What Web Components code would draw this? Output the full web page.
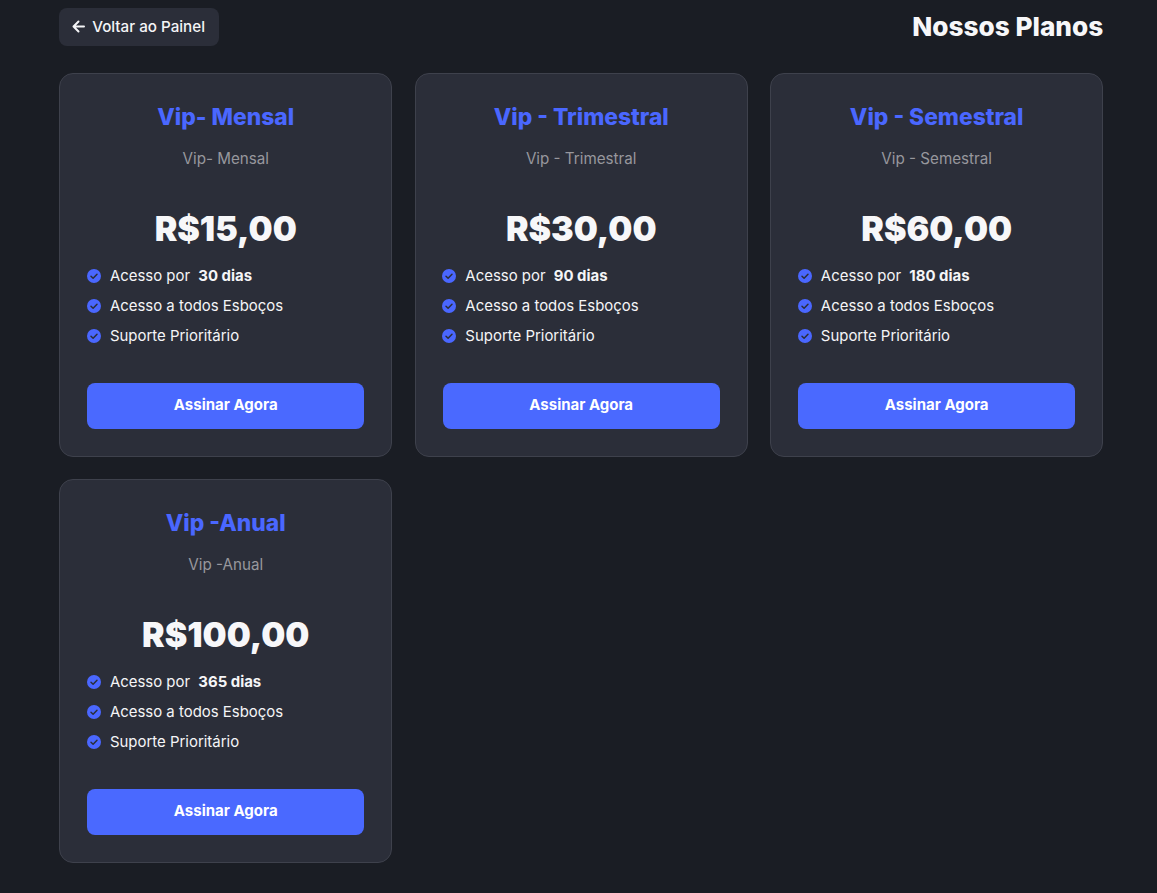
<!DOCTYPE html>
<html lang="pt-BR">
<head>
<meta charset="utf-8">
<title>Nossos Planos</title>
<style>
    html, body { margin: 0; background: #1a1d24; }
    body { font-family: Inter, "Liberation Sans", sans-serif; color: #f5f5f7; }
</style>
</head>
<body>
<plans-page>
    <plan-card name="Vip- Mensal" price="R$15,00" days="30 dias"></plan-card>
    <plan-card name="Vip - Trimestral" price="R$30,00" days="90 dias"></plan-card>
    <plan-card name="Vip - Semestral" price="R$60,00" days="180 dias"></plan-card>
    <plan-card name="Vip -Anual" price="R$100,00" days="365 dias"></plan-card>
</plans-page>

<script>
class PlansPage extends HTMLElement {
    constructor() {
        super();
        this.attachShadow({ mode: 'open' });
        this.shadowRoot.innerHTML = `
            <style>
                :host {
                    display: block;
                    padding: 8px 53.8px 30px 59.2px;
                }
                header {
                    display: flex;
                    justify-content: space-between;
                    align-items: center;
                    margin-bottom: 27px;
                }
                a {
                    display: flex;
                    align-items: center;
                    gap: 7px;
                    height: 38px;
                    box-sizing: border-box;
                    width: 160px;
                    padding: 0 13px 2px;
                    background: #2b2e39;
                    border-radius: 8px;
                    color: #f5f5f7;
                    font-size: 15.2px;
                    font-weight: 500;
                    text-decoration: none;
                    white-space: nowrap;
                }
                svg { width: 13px; height: 13px; flex: none; }
                h1 {
                    margin: 0 0 2px;
                    font-size: 26.2px;
                    font-weight: 800;
                    color: #f7f7f9;
                }
                .grid {
                    display: grid;
                    grid-template-columns: repeat(3, 1fr);
                    gap: 22.4px;
                }
            </style>
            <header>
                <a href="#">
                    <svg viewBox="0 0 13 13" fill="none" stroke="currentColor" stroke-width="2" stroke-linecap="round" stroke-linejoin="round">
                        <path d="M12 6.5H1.5M6.5 1.5l-5 5 5 5"/>
                    </svg>
                    Voltar ao Painel
                </a>
                <h1>Nossos Planos</h1>
            </header>
            <div class="grid"><slot></slot></div>
        `;
    }
}

class PlanFeature extends HTMLElement {
    constructor() {
        super();
        this.attachShadow({ mode: 'open' });
        this.shadowRoot.innerHTML = `
            <style>
                :host {
                    display: flex;
                    align-items: center;
                    gap: 9px;
                    height: 30px;
                    font-size: 14.95px;
                    color: #f5f5f7;
                }
                svg { width: 14px; height: 14px; flex: none; margin-left: -0.3px; }
            </style>
            <svg viewBox="0 0 14 14">
                <circle cx="7" cy="7" r="7" fill="#4a67ff"/>
                <path d="M4 7.2 6.1 9.3 10 5.2" fill="none" stroke="#2b2e39" stroke-width="1.5" stroke-linecap="round" stroke-linejoin="round"/>
            </svg>
            <span><slot></slot></span>
        `;
    }
}

class PlanCard extends HTMLElement {
    constructor() {
        super();
        this.attachShadow({ mode: 'open' });
    }

    connectedCallback() {
        this.render();
    }

    render() {
        const name = this.getAttribute('name') || '';
        const price = this.getAttribute('price') || '';
        const days = this.getAttribute('days') || '';
        this.shadowRoot.innerHTML = `
            <style>
                :host {
                    display: block;
                    box-sizing: border-box;
                    height: 384px;
                    padding: 26px 27px 27px;
                    background: #2b2e39;
                    border: 1px solid #3e414c;
                    border-radius: 14px;
                    text-align: center;
                }
                h2 {
                    margin: 0;
                    font-size: 22.8px;
                    line-height: 34px;
                    font-weight: 800;
                    color: #4a67ff;
                }
                p {
                    margin: 14px 0 0;
                    font-size: 15.2px;
                    line-height: 22px;
                    color: #97979d;
                }
                .price {
                    margin: 32px 0 0;
                    font-size: 33.9px;
                    line-height: 54px;
                    font-weight: 900;
                    color: #f7f7f9;
                }
                .features { margin-top: 5px; text-align: left; }
                strong { font-weight: 700; margin-left: 4px; }
                button {
                    display: block;
                    width: 100%;
                    height: 46px;
                    margin-top: 32px;
                    padding: 0 0 3px;
                    border: 0;
                    border-radius: 8px;
                    background: #4a69ff;
                    color: #fff;
                    font: 700 15px Inter, "Liberation Sans", sans-serif;
                }
            </style>
            <h2>${name}</h2>
            <p>${name}</p>
            <div class="price">${price}</div>
            <div class="features">
                <plan-feature>Acesso por <strong>${days}</strong></plan-feature>
                <plan-feature>Acesso a todos Esboços</plan-feature>
                <plan-feature>Suporte Prioritário</plan-feature>
            </div>
            <button>Assinar Agora</button>
        `;
    }
}

customElements.define('plans-page', PlansPage);
customElements.define('plan-feature', PlanFeature);
customElements.define('plan-card', PlanCard);
</script>
</body>
</html>
